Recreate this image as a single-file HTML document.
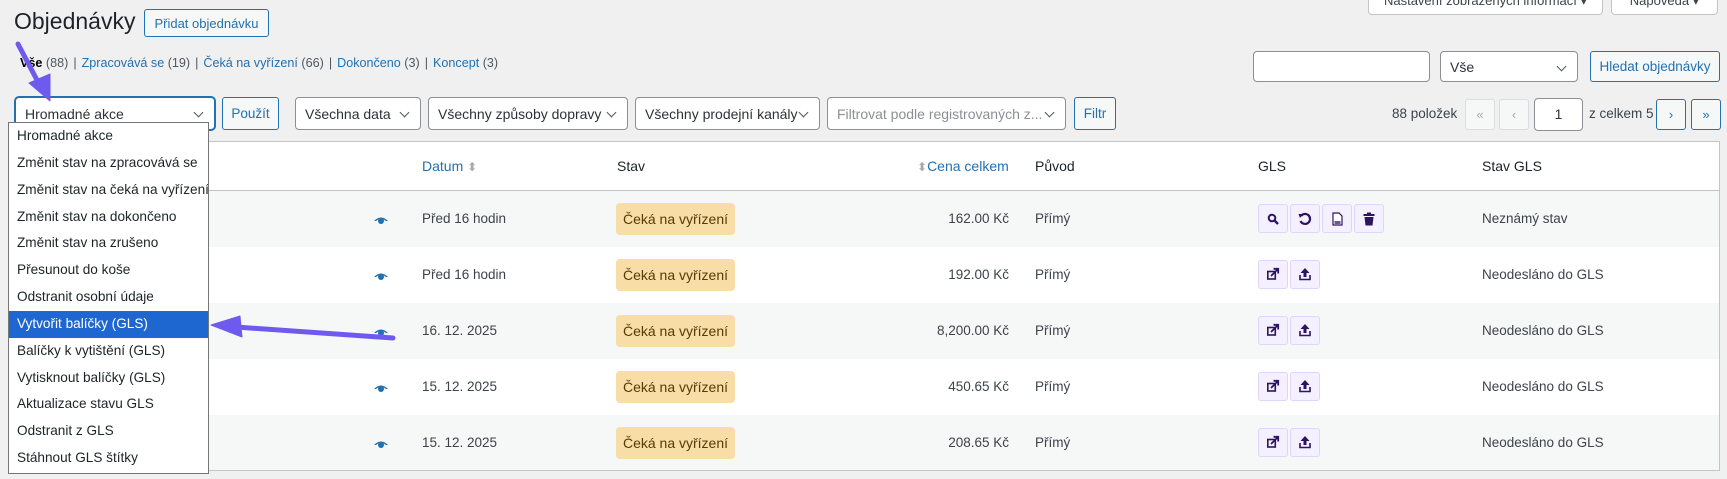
<!DOCTYPE html>
<html><head><meta charset="utf-8"><style>
*{box-sizing:border-box;margin:0;padding:0}
body{width:1727px;height:479px;overflow:hidden;background:#f0f0f1;font-family:"Liberation Sans",sans-serif;font-size:14px;color:#3c434a;position:relative}
.a{position:absolute}
.btn{position:absolute;border:1px solid #2271b1;border-radius:3px;background:#f6f7f7;color:#2271b1;font-size:13.5px;display:flex;align-items:center;justify-content:center}
.sel{position:absolute;border:1px solid #8c8f94;border-radius:4px;background:#fff;color:#2c3338;font-size:14px;display:flex;align-items:center;padding-left:9px;height:33px;top:97px}
.sel:after{content:"";position:absolute;right:12px;top:11px;width:6px;height:6px;border-right:1.5px solid #50575e;border-bottom:1.5px solid #50575e;transform:rotate(45deg)}
.row{position:absolute;left:15px;width:1705px;height:56px;border-left:1px solid #c3c4c7;border-right:1px solid #c3c4c7}
.g{background:#f6f7f7}.w{background:#fff}
.badge{position:absolute;left:616px;width:119px;height:32px;background:#f8dda7;border-radius:4px;display:flex;align-items:center;justify-content:center;font-size:14px;color:#573b00}
.gb{position:absolute;width:30px;height:29px;background:#f5f0ff;border:1px solid #e0d4fb;border-radius:3px;display:flex;align-items:center;justify-content:center}
.dd{position:absolute;left:8px;top:122px;width:201px;height:352px;background:#fff;border:1px solid #767676;font-size:13.6px;color:#1d2327}
.dd div{height:26.85px;line-height:26.85px;padding-left:8px;white-space:nowrap;overflow:hidden}
.dd .h{background:#1e66d0;color:#fff}
.pg{position:absolute;top:99px;width:30px;height:31px;border:1px solid #dcdcde;border-radius:3px;background:#f6f7f7;color:#a7aaad;display:flex;align-items:center;justify-content:center;font-size:13px}
.pg.b{border-color:#2271b1;color:#2271b1}
.sep{margin:0 5px}
</style></head><body>
<div class="a" style="left:1368px;top:-8px;width:235px;height:23px;background:#fff;border:1px solid #c3c4c7;border-radius:0 0 4px 4px;font-size:13px;text-align:center;line-height:16px">Nastavení zobrazených informací ▾</div>
<div class="a" style="left:1611px;top:-8px;width:107px;height:23px;background:#fff;border:1px solid #c3c4c7;border-radius:0 0 4px 4px;font-size:13px;text-align:center;line-height:16px">Nápověda ▾</div>

<div class="a" style="left:14px;top:8px;font-size:23px;color:#1d2327">Objednávky</div>
<div class="btn" style="left:144px;top:9px;width:125px;height:28px;font-size:13px">Přidat objednávku</div>

<div class="a" style="left:20px;top:56px;font-size:12.6px;color:#50575e"><b style="color:#000;font-weight:600">Vše</b> (88)<span class="sep">|</span><span style="color:#2271b1">Zpracovává se</span> (19)<span class="sep">|</span><span style="color:#2271b1">Čeká na vyřízení</span> (66)<span class="sep">|</span><span style="color:#2271b1">Dokončeno</span> (3)<span class="sep">|</span><span style="color:#2271b1">Koncept</span> (3)</div>

<div class="a" style="left:1253px;top:51px;width:177px;height:31px;background:#fff;border:1px solid #8c8f94;border-radius:4px"></div>
<div class="sel" style="left:1440px;top:51px;width:138px;height:31px">Vše</div>
<div class="btn" style="left:1590px;top:51px;width:130px;height:31px">Hledat objednávky</div>

<div class="sel" style="left:15px;width:200px;border:1px solid #2271b1;box-shadow:0 0 0 1px #2271b1">Hromadné akce</div>
<div class="btn" style="left:222px;top:97px;width:57px;height:33px">Použít</div>
<div class="sel" style="left:295px;width:126px">Všechna data</div>
<div class="sel" style="left:428px;width:200px">Všechny způsoby dopravy</div>
<div class="sel" style="left:635px;width:185px">Všechny prodejní kanály</div>
<div class="sel" style="left:827px;width:239px;color:#8c8f94">Filtrovat podle registrovaných z...</div>
<div class="btn" style="left:1074px;top:97px;width:42px;height:33px">Filtr</div>

<div class="a" style="left:1392px;top:106px;font-size:13.5px">88 položek</div>
<div class="pg" style="left:1465px">«</div>
<div class="pg" style="left:1499px">‹</div>
<div class="a" style="left:1534px;top:98px;width:49px;height:33px;background:#fff;border:1px solid #8c8f94;border-radius:4px;text-align:center;line-height:31px;color:#2c3338">1</div>
<div class="a" style="left:1589px;top:106px;font-size:13.5px">z celkem 5</div>
<div class="pg b" style="left:1656px">›</div>
<div class="pg b" style="left:1691px">»</div>

<div class="a" style="left:15px;top:141px;width:1705px;height:50px;background:#fff;border:1px solid #c3c4c7"></div>
<div class="a" style="left:422px;top:158px;color:#2271b1">Datum <span style="color:#a7aaad;font-size:12px">⬍</span></div>
<div class="a" style="left:617px;top:158px;color:#1d2327">Stav</div>
<div class="a" style="left:917px;top:158px;color:#2271b1"><span style="color:#a7aaad;font-size:12px">⬍</span>Cena celkem</div>
<div class="a" style="left:1035px;top:158px;color:#1d2327">Původ</div>
<div class="a" style="left:1258px;top:158px;color:#1d2327">GLS</div>
<div class="a" style="left:1482px;top:158px;color:#1d2327">Stav GLS</div>

<div class="row g" style="top:191px"></div>
<div class="row w" style="top:247px"></div>
<div class="row g" style="top:303px"></div>
<div class="row w" style="top:359px"></div>
<div class="row g" style="top:415px;border-bottom:1px solid #c3c4c7"></div>

<div class="a" style="left:0;top:191px;width:1727px;height:280px;font-size:13.5px">
<svg class="a" style="left:373px;top:22px" width="16" height="250" viewBox="0 0 16 250"><g fill="#2271b1">
<path d="M1 8 Q8 1 15 8 L13 8 Q8 4 3 8Z"/><circle cx="8" cy="8" r="3"/>
<path d="M1 64 Q8 57 15 64 L13 64 Q8 60 3 64Z"/><circle cx="8" cy="64" r="3"/>
<path d="M1 120 Q8 113 15 120 L13 120 Q8 116 3 120Z"/><circle cx="8" cy="120" r="3"/>
<path d="M1 176 Q8 169 15 176 L13 176 Q8 172 3 176Z"/><circle cx="8" cy="176" r="3"/>
<path d="M1 232 Q8 225 15 232 L13 232 Q8 228 3 232Z"/><circle cx="8" cy="232" r="3"/>
</g></svg>
<div class="a" style="left:422px;top:20px">Před 16 hodin</div>
<div class="a" style="left:422px;top:76px">Před 16 hodin</div>
<div class="a" style="left:422px;top:132px">16. 12. 2025</div>
<div class="a" style="left:422px;top:188px">15. 12. 2025</div>
<div class="a" style="left:422px;top:244px">15. 12. 2025</div>
<div class="badge" style="top:12px">Čeká na vyřízení</div>
<div class="badge" style="top:68px">Čeká na vyřízení</div>
<div class="badge" style="top:124px">Čeká na vyřízení</div>
<div class="badge" style="top:180px">Čeká na vyřízení</div>
<div class="badge" style="top:236px">Čeká na vyřízení</div>
<div class="a" style="left:900px;width:109px;text-align:right;top:20px">162.00 Kč</div>
<div class="a" style="left:900px;width:109px;text-align:right;top:76px">192.00 Kč</div>
<div class="a" style="left:900px;width:109px;text-align:right;top:132px">8,200.00 Kč</div>
<div class="a" style="left:900px;width:109px;text-align:right;top:188px">450.65 Kč</div>
<div class="a" style="left:900px;width:109px;text-align:right;top:244px">208.65 Kč</div>
<div class="a" style="left:1035px;top:20px">Přímý</div>
<div class="a" style="left:1035px;top:76px">Přímý</div>
<div class="a" style="left:1035px;top:132px">Přímý</div>
<div class="a" style="left:1035px;top:188px">Přímý</div>
<div class="a" style="left:1035px;top:244px">Přímý</div>
<div class="a" style="left:1482px;top:20px">Neznámý stav</div>
<div class="a" style="left:1482px;top:76px">Neodesláno do GLS</div>
<div class="a" style="left:1482px;top:132px">Neodesláno do GLS</div>
<div class="a" style="left:1482px;top:188px">Neodesláno do GLS</div>
<div class="a" style="left:1482px;top:244px">Neodesláno do GLS</div>
</div>

<div class="gb" style="left:1258px;top:204px"><svg width="12" height="12" viewBox="0 0 12 12"><circle cx="5" cy="5" r="3.3" fill="none" stroke="#2d1460" stroke-width="2"/><path d="M7.5 7.5L11 11" stroke="#2d1460" stroke-width="2.4"/></svg></div>
<div class="gb" style="left:1290px;top:204px"><svg width="14" height="14" viewBox="0 0 14 14"><path d="M3 4A5 5 0 1 1 2.5 9" fill="none" stroke="#2d1460" stroke-width="2.2"/><path d="M0.5 2L5 2L2 6Z" fill="#2d1460"/></svg></div>
<div class="gb" style="left:1322px;top:204px"><svg width="11" height="14" viewBox="0 0 11 14"><path d="M1 1H7L10 4V13H1Z" fill="#fff" stroke="#2d1460" stroke-width="1.2"/><rect x="2.5" y="9" width="6" height="3" fill="#6a5a90"/></svg></div>
<div class="gb" style="left:1354px;top:204px"><svg width="12" height="14" viewBox="0 0 12 14"><rect x="0.5" y="2" width="11" height="2" fill="#2d1460"/><rect x="4" y="0.5" width="4" height="2" fill="#2d1460"/><path d="M1.5 5H10.5L9.5 13.5H2.5Z" fill="#2d1460"/></svg></div>

<div class="gb" style="left:1258px;top:260px"></div><div class="gb" style="left:1290px;top:260px"></div>
<div class="gb" style="left:1258px;top:316px"></div><div class="gb" style="left:1290px;top:316px"></div>
<div class="gb" style="left:1258px;top:372px"></div><div class="gb" style="left:1290px;top:372px"></div>
<div class="gb" style="left:1258px;top:428px"></div><div class="gb" style="left:1290px;top:428px"></div>
<svg class="a" style="left:0;top:0" width="1727" height="479" viewBox="0 0 1727 479">
<defs>
<g id="ext"><rect x="0.8" y="3.5" width="7.5" height="7.5" fill="none" stroke="#2d1460" stroke-width="1.6"/><path d="M4 8L11 1M6.5 0.8H11.2V5.5" fill="none" stroke="#2d1460" stroke-width="1.8"/></g>
<g id="up"><path d="M6 0L10.5 5H7.5V9H4.5V5H1.5Z" fill="#2d1460"/><path d="M1 7V11.5H11V7" fill="none" stroke="#2d1460" stroke-width="1.6"/></g>
</defs>
<use href="#ext" x="1267" y="268"/><use href="#up" x="1299" y="268"/>
<use href="#ext" x="1267" y="324"/><use href="#up" x="1299" y="324"/>
<use href="#ext" x="1267" y="380"/><use href="#up" x="1299" y="380"/>
<use href="#ext" x="1267" y="436"/><use href="#up" x="1299" y="436"/>
</svg>

<div class="dd">
<div>Hromadné akce</div>
<div>Změnit stav na zpracovává se</div>
<div>Změnit stav na čeká na vyřízení</div>
<div>Změnit stav na dokončeno</div>
<div>Změnit stav na zrušeno</div>
<div>Přesunout do koše</div>
<div>Odstranit osobní údaje</div>
<div class="h">Vytvořit balíčky (GLS)</div>
<div>Balíčky k vytištění (GLS)</div>
<div>Vytisknout balíčky (GLS)</div>
<div>Aktualizace stavu GLS</div>
<div>Odstranit z GLS</div>
<div>Stáhnout GLS štítky</div>
</div>

<svg class="a" style="left:0;top:0" width="1727" height="479" viewBox="0 0 1727 479">
<g fill="#6f5af0" stroke="#6f5af0">
<path d="M18 44L38 82" stroke-width="5" stroke-linecap="round"/>
<path d="M29 83L50 74L50 101Z" stroke-width="1" stroke-linejoin="round"/>
<path d="M393 338L236 327" stroke-width="5" stroke-linecap="round"/>
<path d="M240 316L211 325L242 337Z" stroke-width="1" stroke-linejoin="round"/>
</g>
</svg>
</body></html>
